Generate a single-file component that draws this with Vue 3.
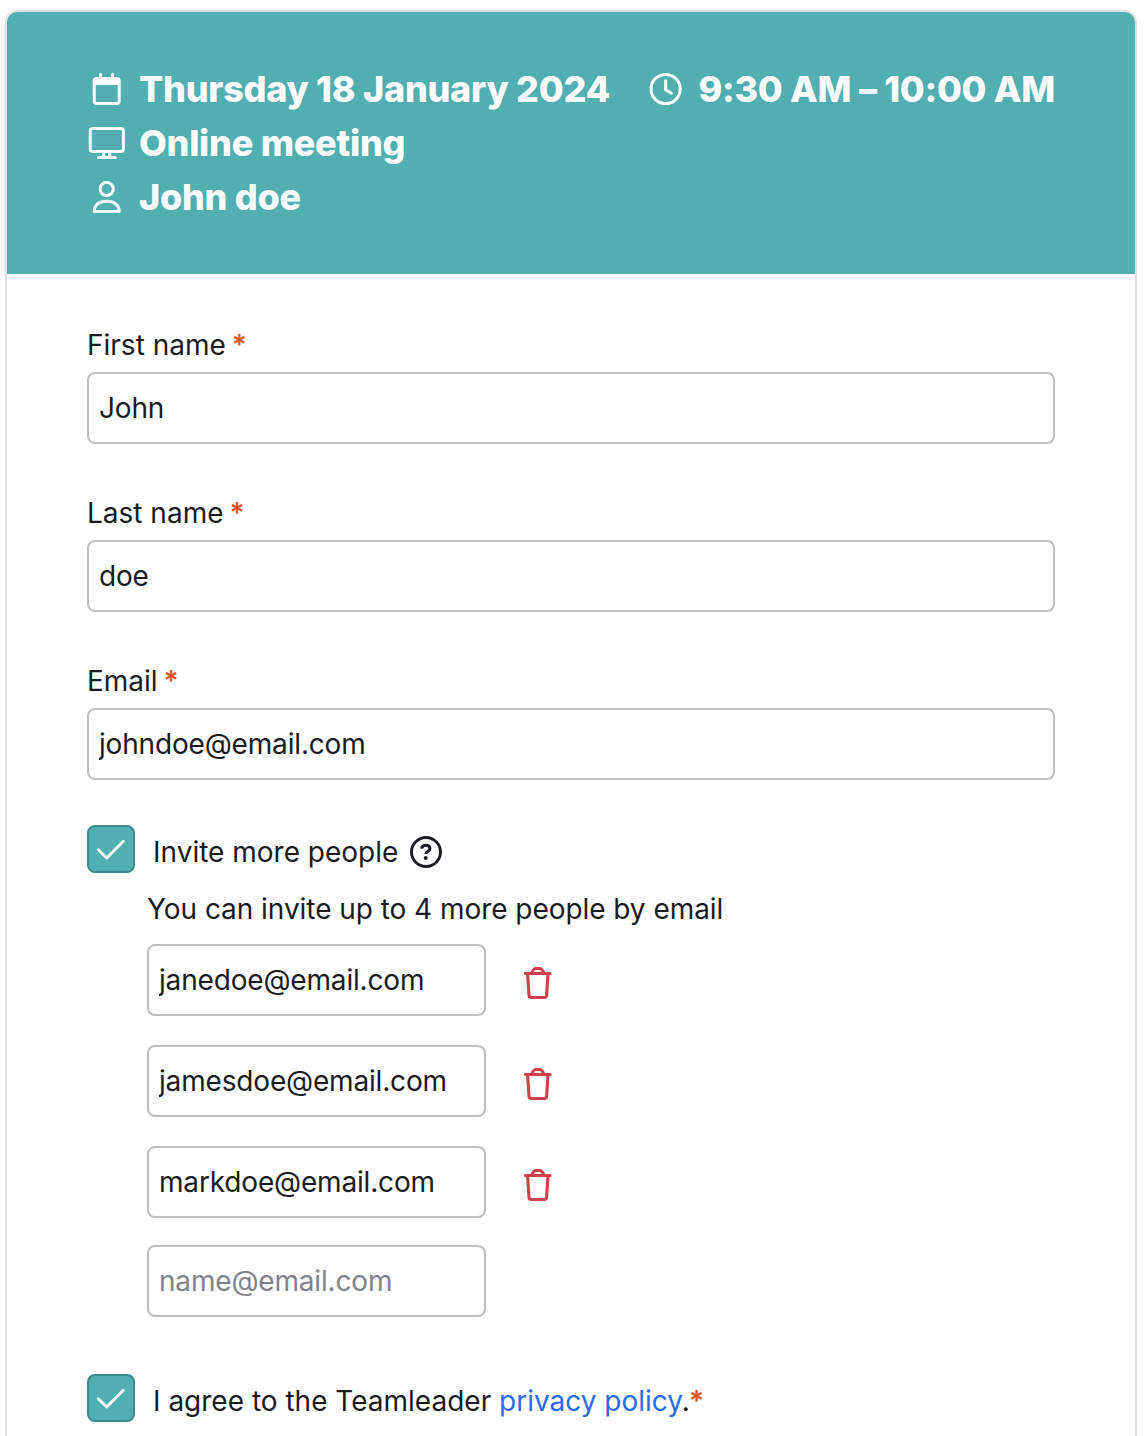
<script setup>
import { ref } from 'vue'

const fields = ref([
  { id: 'first-name', label: 'First name', value: 'John' },
  { id: 'last-name', label: 'Last name', value: 'doe' },
  { id: 'email', label: 'Email', value: 'johndoe@email.com' }
])

const inviteMore = ref(true)
const agreed = ref(true)
const newGuest = ref('')
const guests = ref(['janedoe@email.com', 'jamesdoe@email.com', 'markdoe@email.com'])

const removeGuest = (index) => {
  guests.value.splice(index, 1)
}
</script>

<template>
  <div class="booking-card">
    <header class="booking-header">
      <div class="header-row">
        <div class="header-item">
          <svg class="header-icon" viewBox="0 0 40 36" fill="none" stroke="#fff" stroke-width="3" stroke-linecap="round">
            <rect x="7.2" y="7.4" width="25" height="25" rx="2.4" />
            <path d="M7 7h25.4v7H7z" fill="#fff" stroke="none" />
            <path d="M13.6 3.6v5M25.6 3.6v5" />
          </svg>
          <span>Thursday 18 January 2024</span>
        </div>
        <div class="header-item">
          <svg class="header-icon" viewBox="0 0 40 36" fill="none" stroke="#fff" stroke-width="3" stroke-linecap="round" stroke-linejoin="round">
            <circle cx="19.6" cy="18" r="14.6" />
            <path d="M19.6 9.7v9.1l5.8 3.4" />
          </svg>
          <span>9:30 AM – 10:00 AM</span>
        </div>
      </div>
      <div class="header-item">
        <svg class="header-icon" viewBox="0 0 40 36" fill="none" stroke="#fff" stroke-width="3" stroke-linecap="round">
          <rect x="3.2" y="3.5" width="33.2" height="23" rx="2.6" />
          <path d="M16.6 27v5M22.6 27v5M11.4 32.6h16.8" />
        </svg>
        <span>Online meeting</span>
      </div>
      <div class="header-item">
        <svg class="header-icon" viewBox="0 0 40 36" fill="none" stroke="#fff" stroke-width="3" stroke-linejoin="round">
          <circle cx="19.7" cy="10" r="6.6" />
          <path d="M7.2 32.5c0-6.8 5.1-10.2 12.5-10.2s12.5 3.4 12.5 10.2z" />
        </svg>
        <span>John doe</span>
      </div>
    </header>

    <form class="booking-form" @submit.prevent>
      <div v-for="field in fields" :key="field.id" class="field">
        <label :for="field.id">{{ field.label }} <span class="required">*</span></label>
        <input :id="field.id" v-model="field.value" class="text-input" type="text" />
      </div>

      <label class="check-row">
        <input v-model="inviteMore" class="check-input" type="checkbox" />
        <span class="check-box">
          <svg v-if="inviteMore" viewBox="0 0 48 48" fill="none" stroke="#fff" stroke-width="2.9" stroke-linecap="round" stroke-linejoin="round">
            <path d="M11.3 24.8l8.4 8.2 16.6-16.8" />
          </svg>
        </span>
        <span class="check-text">Invite more people</span>
        <svg class="help-icon" viewBox="0 0 32 32" fill="none" stroke="#1a1b21" stroke-linecap="round">
          <circle cx="16" cy="16" r="14.5" stroke-width="2.9" />
          <path d="M11.6 12.6c.3-2.2 1.9-3.4 4.2-3.4 2.4 0 4.1 1.3 4.1 3.3 0 1.6-.9 2.3-2.1 3-1.3.8-2 1.3-2 2.5" stroke-width="3.1" stroke-linecap="butt" />
          <circle cx="15.7" cy="22" r="2" fill="#1a1b21" stroke="none" />
        </svg>
      </label>

      <div v-if="inviteMore" class="guests">
        <p class="guests-hint">You can invite up to 4 more people by email</p>
        <div v-for="(guest, index) in guests" :key="index" class="guest-row">
          <input v-model="guests[index]" class="text-input guest-input" type="text" />
          <button class="remove-btn" type="button" aria-label="Remove" @click="removeGuest(index)">
            <svg viewBox="0 0 28 34" fill="none" stroke="#cd4148" stroke-width="3.1" stroke-linecap="round" stroke-linejoin="round">
              <path d="M1.5 7.5h24.6M3.6 7.8l1.4 21.4c.1 1.5.8 2.3 2.2 2.3h13.2c1.4 0 2.1-.8 2.2-2.3L24 7.8M7.8 7c1.1-3 2.3-4.5 4.1-4.5h3.8c1.8 0 3 1.5 4.1 4.5" />
            </svg>
          </button>
        </div>
        <input v-model="newGuest" class="text-input guest-input" type="text" placeholder="name@email.com" />
      </div>

      <label class="check-row agree-row">
        <input v-model="agreed" class="check-input" type="checkbox" />
        <span class="check-box">
          <svg v-if="agreed" viewBox="0 0 48 48" fill="none" stroke="#fff" stroke-width="2.9" stroke-linecap="round" stroke-linejoin="round">
            <path d="M11.3 24.8l8.4 8.2 16.6-16.8" />
          </svg>
        </span>
        <span class="check-text">I agree to the Teamleader <a href="#" class="link">privacy policy</a>.<span class="required">*</span></span>
      </label>
    </form>
  </div>
</template>

<style>
body {
  margin: 0;
  background: #fff;
}

#app {
  height: 1436px;
  overflow: hidden;
}
</style>

<style scoped>
.booking-card {
  box-sizing: border-box;
  width: 1132px;
  height: 1460px;
  margin: 10px 0 0 5px;
  border: 2px solid #e1e1e3;
  border-radius: 12px;
  overflow: hidden;
  font-family: Inter, sans-serif;
  font-size: 28px;
  line-height: 40px;
  color: #1a1b21;
}

.booking-header {
  padding: 50px 80px;
  background: #51aeb1;
  border-radius: 8px 8px 0 0;
  color: #fff;
  font-size: 36px;
  font-weight: 800;
  line-height: 54px;
  letter-spacing: -0.26px;
  white-space: nowrap;
}

.header-row {
  display: flex;
  justify-content: space-between;
}

.header-item {
  display: flex;
  align-items: center;
  gap: 12px;
}

.header-icon {
  width: 40px;
  height: 36px;
  flex: none;
}

.booking-form {
  padding: 51px 80px 0;
}

.field {
  display: flex;
  flex-direction: column;
  gap: 7px;
  margin-bottom: 49px;
}

.required {
  color: #d5552b;
  font-weight: 600;
  margin-left: -1px;
}

.field .required {
  margin-left: -2px;
}

.text-input {
  box-sizing: border-box;
  width: 100%;
  height: 72px;
  padding: 0 10px;
  border: 2px solid #bebec3;
  border-radius: 8px;
  background: #fff;
  color: #1a1b21;
  font-family: inherit;
  font-size: 28px;
  letter-spacing: -0.17px;
  outline: none;
}

.text-input::placeholder {
  color: #82828c;
  opacity: 1;
}

.check-row {
  display: flex;
  height: 48px;
  margin-top: -4px;
}

.check-input {
  position: absolute;
  opacity: 0;
  pointer-events: none;
}

.check-box {
  box-sizing: border-box;
  width: 48px;
  height: 48px;
  border: 2px solid #3b8a8d;
  border-radius: 8px;
  background: #51aeb1;
}

.check-box svg {
  display: block;
  width: 48px;
  height: 48px;
  margin: -2px;
}

.check-text {
  margin: 7px 12px 0 18px;
}

.help-icon {
  width: 32px;
  height: 32px;
  margin-top: 11px;
}

.guests {
  padding-left: 60px;
  margin-top: 16px;
}

.guests-hint {
  margin: 0 0 15px;
  letter-spacing: -0.05px;
}

.guest-row {
  display: flex;
  gap: 38px;
  margin-bottom: 29px;
}

.guest-row + .text-input {
  display: block;
  margin-top: -2px;
}

.guest-input {
  width: 339px;
}

.remove-btn {
  width: 28px;
  height: 34px;
  margin-top: 22px;
  padding: 0;
  border: none;
  background: none;
  cursor: pointer;
}

.remove-btn svg {
  display: block;
  width: 28px;
  height: 34px;
}

.agree-row {
  margin-top: 57px;
}

.link {
  color: #2a6bea;
  text-decoration: none;
}
</style>
